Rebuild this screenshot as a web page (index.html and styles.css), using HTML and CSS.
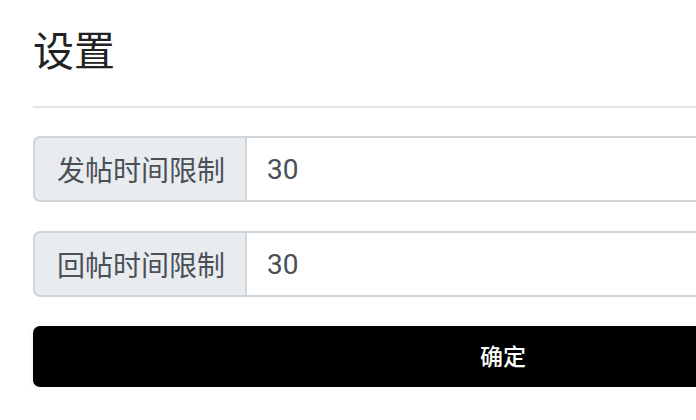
FILE: index.html
```html
<!DOCTYPE html>
<html lang="zh-CN">
<head>
<meta charset="utf-8">
<title>设置</title>
<link rel="stylesheet" href="styles.css">
</head>
<body>
<div class="page">
  <h1 class="title">设置</h1>
  <hr class="divider">
  <form class="settings">
    <div class="input-group">
      <span class="addon">发帖时间限制</span>
      <input class="field" type="text" value="30">
    </div>
    <div class="input-group">
      <span class="addon">回帖时间限制</span>
      <input class="field" type="text" value="30">
    </div>
    <button class="submit" type="button">确定</button>
  </form>
</div>
</body>
</html>
```

FILE: styles.css
```css
html, body {
  margin: 0;
  padding: 0;
  background: #ffffff;
  overflow: hidden;
}
body {
  font-family: Roboto, "Noto Sans CJK SC", "Noto Sans", sans-serif;
  color: #212529;
}
.page {
  width: 940px;
  padding-left: 33px;
}
.title {
  margin: 28px 0 0 0;
  font-size: 41px;
  line-height: 48px;
  font-weight: 400;
  color: #222;
}
.divider {
  margin: 30px 0 0 0;
  border: 0;
  border-top: 2px solid #e4e5e7;
  height: 0;
}
.settings {
  display: flex;
  flex-direction: column;
  gap: 29px;
  margin-top: 28px;
}
.input-group {
  display: flex;
  height: 66px;
  box-sizing: border-box;
}
.addon {
  display: flex;
  align-items: center;
  box-sizing: border-box;
  width: 213px;
  padding: 0 22px;
  font-size: 28px;
  color: #495057;
  background: #e9ecef;
  border: 2px solid #ced4da;
  border-right-width: 1px;
  border-radius: 7px 0 0 7px;
  white-space: nowrap;
}
.field {
  flex: 1;
  min-width: 0;
  box-sizing: border-box;
  height: 66px;
  margin: 0;
  padding: 0 20px;
  font-family: Roboto, "Noto Sans CJK SC", sans-serif;
  font-size: 28px;
  color: #495057;
  background: #fff;
  border: 2px solid #ced4da;
  border-left-width: 1px;
  border-radius: 0 7px 7px 0;
  outline: none;
}
.submit {
  height: 61px;
  margin: 0;
  padding: 0 0 4px 0;
  border: 0;
  border-radius: 7px;
  background: #000;
  color: #fff;
  font-family: Roboto, "Noto Sans CJK SC", sans-serif;
  font-size: 23px;
  font-weight: 500;
  box-shadow: 0 3px 6px rgba(0, 0, 0, 0.08);
  cursor: pointer;
}
```
